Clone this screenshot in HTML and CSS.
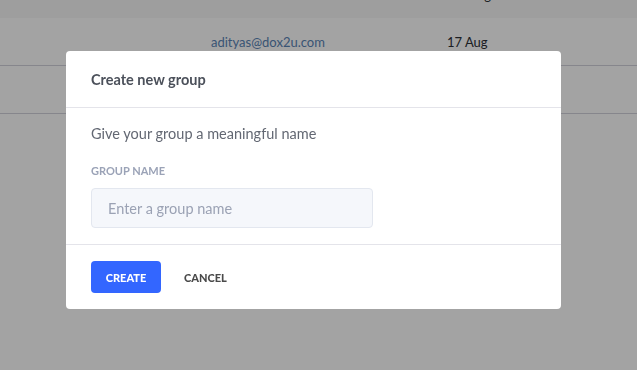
FILE: index.html
```html
<!DOCTYPE html>
<html lang="en">
  <head>
    <meta charset="utf-8">
    <title>Create new group</title>
    <link rel="stylesheet" href="styles.css">
  </head>
  <body>
    <div class="table">
      <div class="row head">
        <div class="cell c-name"></div>
        <div class="cell c-mail"></div>
        <div class="cell c-date">Last login</div>
      </div>
      <div class="row">
        <div class="cell c-name"></div>
        <div class="cell c-mail mail">adityas@dox2u.com</div>
        <div class="cell c-date">17 Aug</div>
      </div>
      <div class="row"></div>
    </div>

    <div class="backdrop"></div>

    <div class="modal">
      <div class="modal-head">Create new group</div>
      <div class="modal-body">
        <p class="hint">Give your group a meaningful name</p>
        <label class="label" for="group-name">GROUP NAME</label>
        <input class="input" id="group-name" type="text" placeholder="Enter a group name">
      </div>
      <div class="modal-foot">
        <button class="btn btn-primary">CREATE</button>
        <button class="btn btn-text">CANCEL</button>
      </div>
    </div>
  </body>
</html>
```

FILE: styles.css
```css
html { box-sizing : border-box }
*, *:before, *:after { box-sizing : inherit }

:root {
  --c-page : #ffffff;
  --c-line : #e4e4ea;
  --c-text : #4b505a;
  --c-muted : #636873;
  --c-label : #9ba3b7;
  --c-input : #f5f7fb;
  --c-input-line : #e3e7ef;
  --c-accent : #3366ff;

  --f-prop : Lato, "Open Sans", sans-serif;
}

body {
  margin : 0;
  height : 370px;
  overflow : hidden;
  background-color : var(--c-page);
  font-family : var(--f-prop);
}

.table { width : 100% }

.row {
  display : flex;
  height : 48px;
  align-items : center;
  border-bottom : 1px solid #d2d2dc;
  font-size : 13px;
  color : #2c2f36;
}

.row.head {
  height : 18px;
  align-items : flex-end;
  background-color : #f8f8f8;
  border-bottom : 0;
}

/* header labels sit above the scrolled viewport, only descenders show */
.row.head .cell { margin-bottom : 16px; line-height : 1 }

.cell { flex : none }
.c-name { width : 211px }
.c-mail { width : 236px }
.c-date { width : 120px }

.mail { color : #5a84b6 }

.backdrop {
  position : fixed;
  inset : 0;
  background-color : rgba(0, 0, 0, 0.36);
}

.modal {
  position : fixed;
  left : 66px;
  top : 51px;
  width : 495px;
  background-color : #fff;
  border-radius : 4px;
}

.modal-head {
  height : 57px;
  padding : 0 25px;
  display : flex;
  align-items : center;
  border-bottom : 1px solid var(--c-line);
  font-size : 14.5px;
  font-weight : bold;
  color : var(--c-text);
}

.modal-body {
  padding : 17px 25px 16px;
  border-bottom : 1px solid var(--c-line);
}

.hint {
  margin : 0 0 22px;
  font-size : 14.5px;
  color : var(--c-muted);
}

.label {
  display : block;
  margin-bottom : 11px;
  font-size : 11px;
  font-weight : bold;
  color : var(--c-label);
}

.input {
  display : block;
  width : 282px;
  height : 40px;
  padding : 0 16px;
  background-color : var(--c-input);
  border : 1px solid var(--c-input-line);
  border-radius : 4px;
  font-family : var(--f-prop);
  font-size : 14.5px;
  color : var(--c-text);
}

.input::placeholder { color : #9ba2b4 }

.modal-foot {
  display : flex;
  align-items : center;
  gap : 8px;
  padding : 16px 25px;
}

.btn {
  height : 32px;
  border : 0;
  border-radius : 4px;
  font-family : var(--f-prop);
  font-size : 11px;
  font-weight : 900;
  cursor : pointer;
}

.btn-primary {
  width : 70px;
  background-color : var(--c-accent);
  color : #fff;
}

.btn-text {
  padding : 0 15px;
  background : none;
  color : #4a4a4a;
}
```
